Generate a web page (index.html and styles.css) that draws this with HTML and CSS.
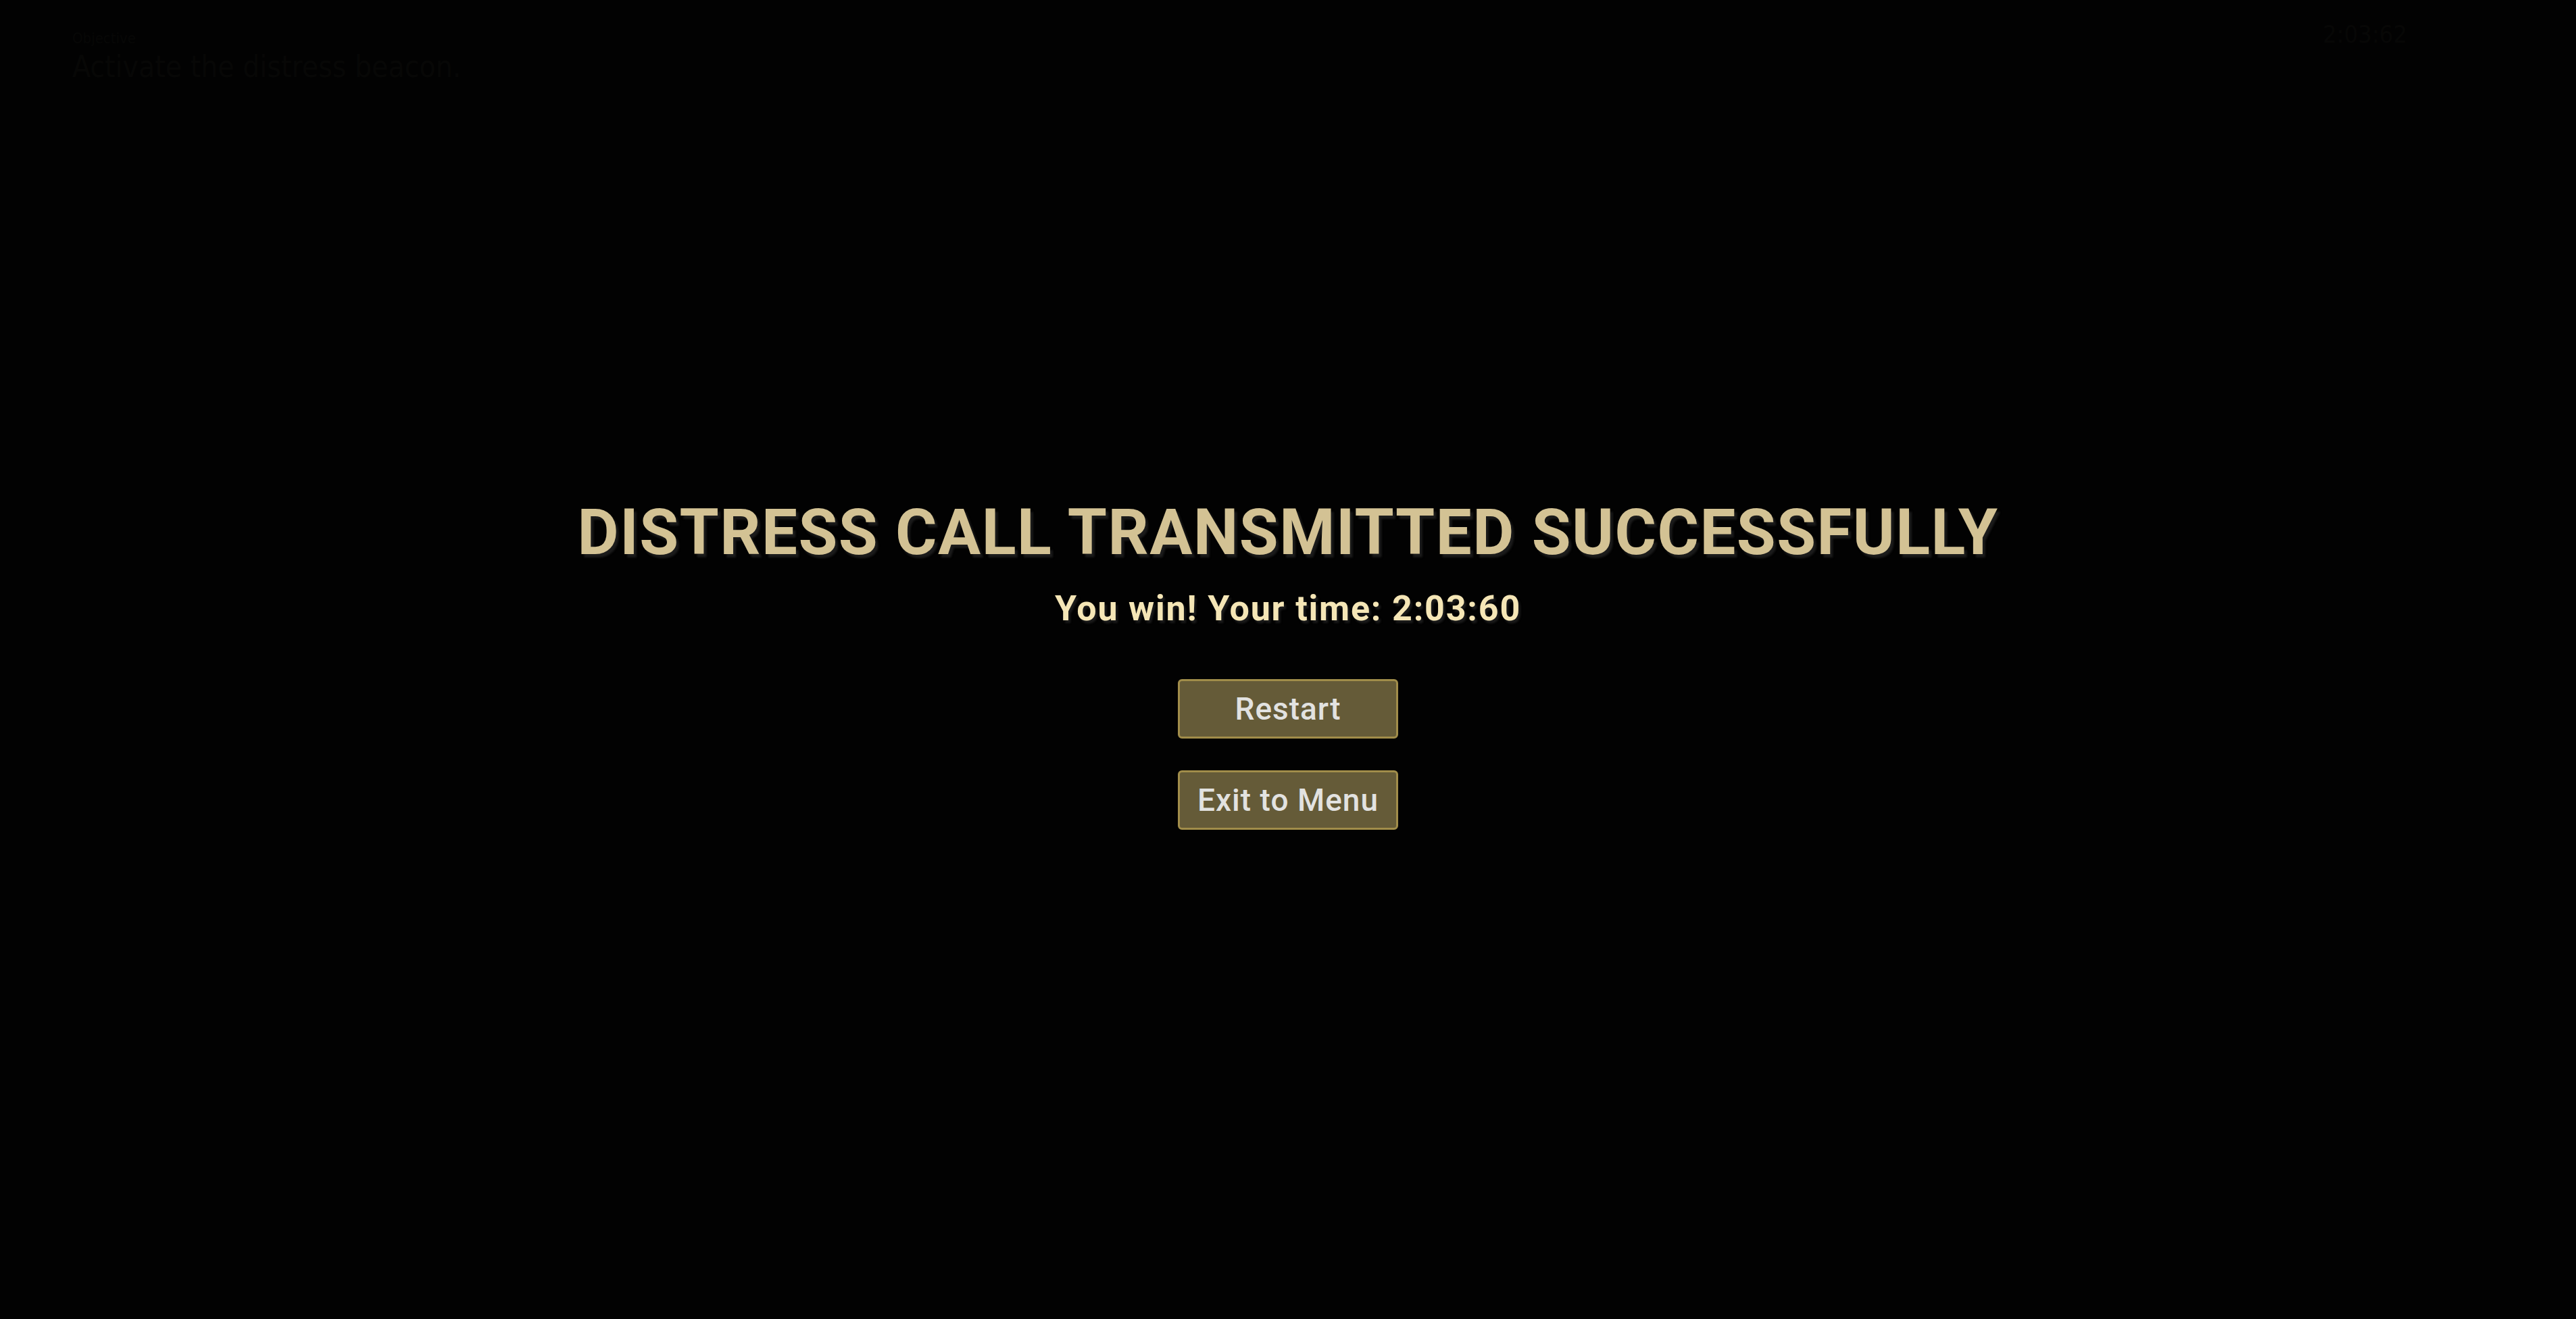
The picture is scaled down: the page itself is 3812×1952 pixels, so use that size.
FILE: index.html
```html
<!DOCTYPE html>
<html lang="en">
<head>
<meta charset="UTF-8">
<meta name="viewport" content="width=device-width, initial-scale=1.0">
<title>Distress Call</title>
<link rel="stylesheet" href="styles.css">
</head>
<body>
  <div class="hud">
      <div class="objective">
          <div class="objective-label">Objective</div>
          <div class="objective-text">Activate the distress beacon.</div>
      </div>
      <div class="timer">2:03:62</div>
  </div>

  <div class="overlay">
      <h1 class="win-title">DISTRESS CALL TRANSMITTED SUCCESSFULLY</h1>
      <p class="win-time">You win! Your time: 2:03:60</p>
      <div class="menu">
          <button class="menu-btn" id="restartBtn">Restart</button>
          <button class="menu-btn" id="exitBtn">Exit to Menu</button>
      </div>
  </div>
</body>
</html>
```

FILE: styles.css
```css
html, body {
    height: 100%;
}

body {
    margin: 0;
    background-color: #020202;
    font-family: Roboto, "Liberation Sans", sans-serif;
    overflow: hidden;
}

/* faint game hud under the overlay */
.hud {
    position: absolute;
    inset: 0;
    color: #070706;
    font-family: "DejaVu Sans Condensed", "Liberation Sans Narrow", sans-serif;
}

.objective {
    position: absolute;
    left: 107px;
    top: 44px;
}

.objective-label {
    font-size: 22px;
}

.objective-text {
    font-size: 44px;
    margin-top: 4px;
}

.timer {
    position: absolute;
    right: 250px;
    top: 30px;
    font-size: 36px;
}

.overlay {
    position: relative;
    height: 100%;
    display: flex;
    flex-direction: column;
    align-items: center;
    justify-content: center;
    padding-top: 16px;
    box-sizing: border-box;
}

.win-title {
    margin: 0;
    font-size: 94px;
    font-weight: 700;
    letter-spacing: 1.5px;
    color: #d3c294;
    text-shadow: 4px 5px 3px rgba(28, 28, 28, 0.95);
    line-height: 1;
}

.win-time {
    margin: 40px 0 0 0;
    font-size: 52px;
    font-weight: 700;
    letter-spacing: 1.8px;
    color: #f5e6b6;
    text-shadow: 3px 4px 3px rgba(28, 28, 28, 0.95);
    line-height: 1;
}

.menu {
    display: flex;
    flex-direction: column;
    gap: 47px;
    margin-top: 78px;
}

.menu-btn {
    width: 326px;
    height: 88px;
    background-color: #655b38;
    border: 3px solid #a18d4a;
    border-radius: 6px;
    color: #e2e2e0;
    font-family: Roboto, "Liberation Sans", sans-serif;
    font-size: 46px;
    font-weight: 500;
    letter-spacing: 1px;
    cursor: pointer;
    padding: 0;
}

.menu-btn:hover {
    background-color: #756a42;
}
```
